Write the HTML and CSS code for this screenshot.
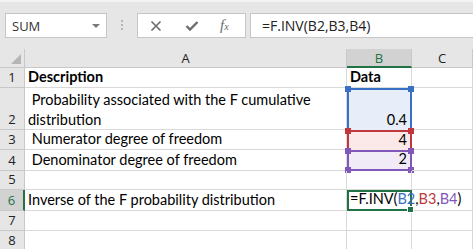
FILE: index.html
```html
<!DOCTYPE html>
<html lang="en">
  <head>
    <meta charset="UTF-8" />
    <meta name="viewport" content="width=device-width, initial-scale=1.0" />
    <title>F.INV</title>
    <link rel="stylesheet" href="styles.css">
  </head>

  <body>

    <div class="toolbar">
      <div class="namebox">
        <span>SUM</span>
        <span class="caret"></span>
      </div>
      <div class="grip"><i></i><i></i><i></i></div>
      <div class="fxbox">
        <svg class="ico" width="12" height="12" viewBox="0 0 12 12">
          <path d="M1.5 1.5 L10.5 10.5 M10.5 1.5 L1.5 10.5" stroke="#6b6b6b" stroke-width="1.6" fill="none"/>
        </svg>
        <svg class="ico" width="14" height="12" viewBox="0 0 14 12">
          <path d="M1.5 6 L5 9.5 L12.5 2" stroke="#6b6b6b" stroke-width="2.4" fill="none"/>
        </svg>
        <span class="fx">f<sub>x</sub></span>
      </div>
      <div class="formula">=F.INV(B2,B3,B4)</div>
    </div>

    <div class="sheet">
      <div class="hd corner"><span class="tri"></span></div>
      <div class="hd col">A</div>
      <div class="hd col on">B</div>
      <div class="hd col">C</div>

      <div class="hd row">1</div>
      <div class="cell b">Description</div>
      <div class="cell b">Data</div>
      <div class="cell"></div>

      <div class="hd row">2</div>
      <div class="cell wrap"> Probability associated with the F cumulative<br>distribution</div>
      <div class="cell num ref blue">0.4<span class="sq tl"></span><span class="sq tr"></span></div>
      <div class="cell"></div>

      <div class="hd row">3</div>
      <div class="cell"> Numerator degree of freedom</div>
      <div class="cell num ref red">4<span class="sq tl"></span><span class="sq tr"></span></div>
      <div class="cell"></div>

      <div class="hd row">4</div>
      <div class="cell"> Denominator degree of freedom</div>
      <div class="cell num ref purple">2<span class="sq tl"></span><span class="sq tr"></span><span class="sq bl"></span><span class="sq br"></span></div>
      <div class="cell"></div>

      <div class="hd row">5</div>
      <div class="cell"></div>
      <div class="cell"></div>
      <div class="cell"></div>

      <div class="hd row on">6</div>
      <div class="cell">Inverse of the F probability distribution</div>
      <div class="cell active">=F.INV(<span class="c-blue">B2</span>,<span class="c-red">B3</span>,<span class="c-purple">B4</span>)<span class="caretline"></span><span class="handle"></span></div>
      <div class="cell"></div>

      <div class="hd row">7</div>
      <div class="cell"></div>
      <div class="cell"></div>
      <div class="cell"></div>

      <div class="hd row">8</div>
      <div class="cell"></div>
      <div class="cell"></div>
      <div class="cell"></div>
    </div>

  </body>
</html>
```

FILE: styles.css
```css
body {
  margin: 0;
  width: 473px;
  height: 249px;
  overflow: hidden;
  background: #ffffff;
  font-family: Lato, "Open Sans", sans-serif;
  font-size: 14.5px;
  color: #000000;
}

.toolbar {
  height: 49px;
  box-sizing: border-box;
  background: #e6e6e6;
  border-top: 2px solid #f3f3f3;
  padding: 11px 0 0 5px;
  display: flex;
  align-items: flex-start;
}

.namebox {
  width: 102px;
  height: 25px;
  box-sizing: border-box;
  background: #ffffff;
  border: 1px solid #c6c6c6;
  display: flex;
  align-items: center;
  justify-content: space-between;
  padding: 0 6px 0 6px;
  font-family: "Open Sans", sans-serif;
  font-size: 13px;
  color: #333333;
}

.caret {
  width: 0;
  height: 0;
  border-left: 4px solid transparent;
  border-right: 4px solid transparent;
  border-top: 4px solid #7a7a7a;
}

.grip {
  width: 30px;
  display: flex;
  flex-direction: column;
  align-items: center;
  gap: 2px;
  padding-top: 7px;
}

.grip i {
  width: 2px;
  height: 2px;
  background: #b5b5b5;
}

.fxbox {
  width: 109px;
  height: 25px;
  box-sizing: border-box;
  background: #ffffff;
  border: 1px solid #c6c6c6;
  display: flex;
  align-items: center;
  padding: 0 0 0 12px;
  gap: 23px;
}

.fx {
  font-family: "Liberation Serif", serif;
  font-style: italic;
  font-size: 15px;
  color: #6b6b6b;
  margin-left: -2px;
}

.fx sub {
  font-size: 10px;
  vertical-align: 0;
}

.formula {
  flex: 1;
  margin-left: 4px;
  height: 25px;
  box-sizing: border-box;
  background: #ffffff;
  border: 1px solid #c6c6c6;
  border-right: none;
  padding-left: 11px;
  display: flex;
  align-items: center;
  font-family: "Open Sans", sans-serif;
  font-size: 14px;
  color: #222222;
}

.sheet {
  display: grid;
  grid-template-columns: 25px 322px 65px 1fr;
  grid-template-rows: 19px 20px 42px 20px 21px 19px 21px 20px 20px;
}

.hd {
  background: #e6e6e6;
  box-sizing: border-box;
  border-right: 1px solid #c8c8c8;
  border-bottom: 1px solid #c8c8c8;
  color: #222222;
  font-family: "Open Sans", sans-serif;
  font-size: 13px;
  display: flex;
  align-items: center;
  justify-content: center;
}

.hd.corner {
  border-right: 1px solid #c8c8c8;
  position: relative;
}

.tri {
  position: absolute;
  right: 3px;
  bottom: 3px;
  width: 0;
  height: 0;
  border-left: 10px solid transparent;
  border-bottom: 10px solid #b5b5b5;
}

.hd.col.on {
  background: #d2d2d2;
  color: #217346;
  border-bottom: 2px solid #217346;
}

.hd.row {
  align-items: flex-end;
  padding-bottom: 1px;
}

.hd.row.on {
  background: #d2d2d2;
  color: #217346;
  border-right: 2px solid #217346;
}

.cell {
  box-sizing: border-box;
  border-right: 1px solid #d9d9d9;
  border-bottom: 1px solid #d9d9d9;
  padding: 0 3px 1px 3px;
  display: flex;
  align-items: flex-end;
  white-space: pre;
  line-height: 19px;
  position: relative;
}

.cell.b {
  font-weight: bold;
}

.cell.wrap {
  display: block;
  padding-top: 2px;
  line-height: 20px;
}

.cell.num {
  justify-content: flex-end;
}

.ref {
  border: 2px solid;
}

.blue {
  background: #e7eef9;
  border-color: #3a6fc6;
  border-bottom: none;
}

.red {
  background: #fbe8e8;
  border-color: #c1373c;
  border-bottom: none;
}

.purple {
  background: #f0ebf7;
  border-color: #8157ba;
}

.sq {
  position: absolute;
  width: 6px;
  height: 6px;
  background: inherit;
}

.blue .sq { background: #3a6fc6; }
.red .sq { background: #c1373c; }
.purple .sq { background: #8157ba; }

.sq.tl { left: -4px; top: -4px; }
.sq.tr { right: -4px; top: -4px; }
.sq.bl { left: -4px; bottom: -4px; }
.sq.br { right: -4px; bottom: -4px; }

.active {
  border: 2px solid #217346;
  padding-left: 1px;
  z-index: 2;
}

.c-blue { color: #3a6fc6; }
.c-red { color: #c1373c; }
.c-purple { color: #8157ba; }

.caretline {
  width: 1px;
  height: 17px;
  background: #000000;
  margin-left: 2px;
  margin-bottom: 0;
}

.handle {
  position: absolute;
  right: -4px;
  bottom: -4px;
  width: 5px;
  height: 5px;
  background: #217346;
  border: 1px solid #ffffff;
}
```
